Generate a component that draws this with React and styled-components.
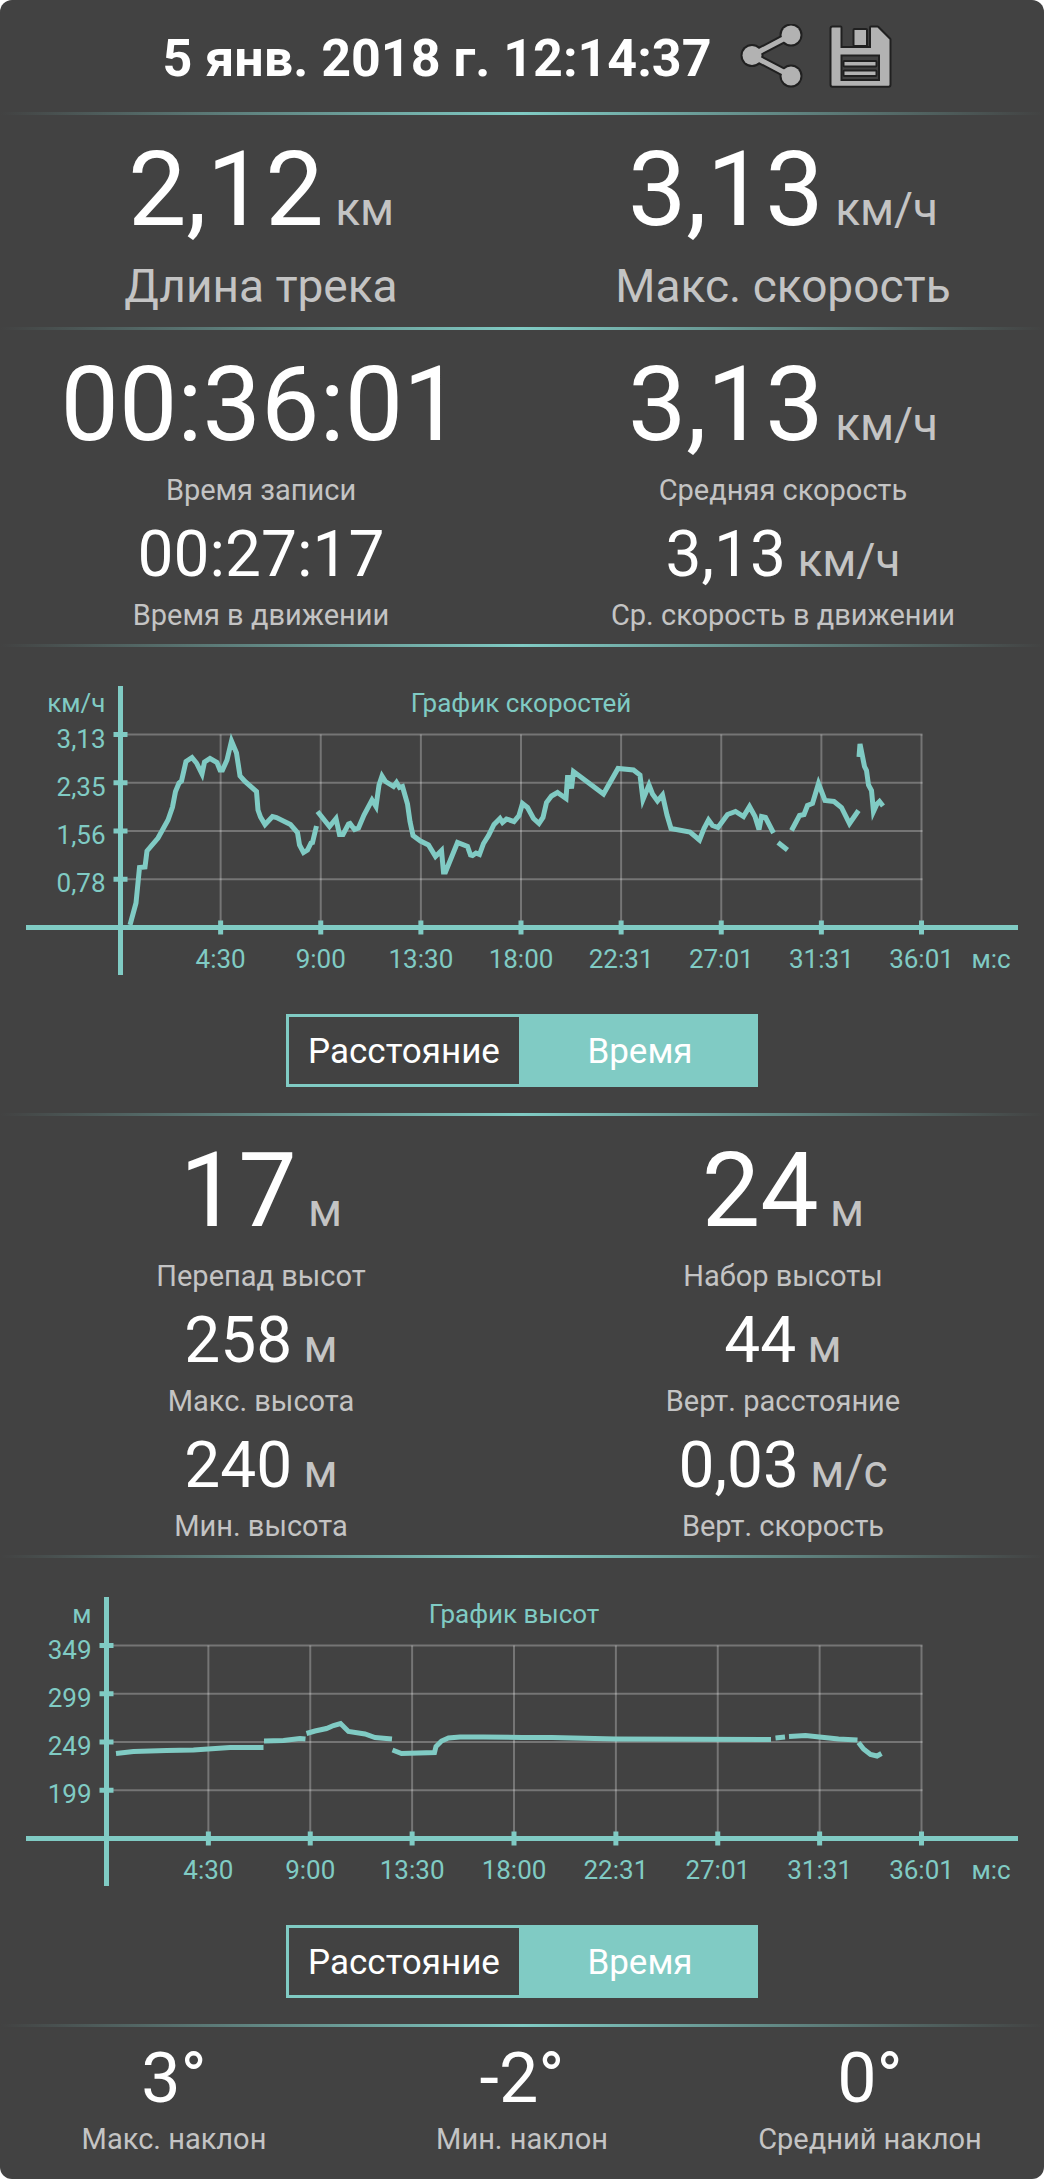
import React, { useState } from "react"
import styled, { createGlobalStyle } from "styled-components"

const colors = {
  page: "#ffffff",
  card: "#424242",
  accent: "#80cbc4",
  text: "#ffffff",
  muted: "#c4c4c4",
  icon: "#b2b2b2",
  outline: "#202020",
  grid: "rgba(255, 255, 255, .27)"
}

const GlobalStyle = createGlobalStyle`
  body {
    margin: 0;
    background: ${colors.page};
    font-family: Roboto, "Noto Sans", sans-serif;
  }
`

const Card = styled.main`
  padding-bottom: 11px;
  background: ${colors.card};
  color: ${colors.text};
  border-radius: 12px;
  overflow: hidden;
`

const Header = styled.header`
  display: flex;
  align-items: center;
  justify-content: center;
  height: 112px;
  padding-left: 10px;
`

const Title = styled.h1`
  margin: 0 28px 0 0;
  padding-top: 6px;
  font-size: 52px;
  line-height: 60px;
  font-weight: 700;
`

const IconButton = styled.button`
  display: block;
  width: 64px;
  height: 64px;
  padding: 0;
  border: 0;
  background: none;
  cursor: pointer;

  & + & {
    margin-left: 24px;
  }
`

const Divider = styled.hr`
  height: 3px;
  margin: 0;
  border: 0;
  background: linear-gradient(to right, transparent, ${colors.accent}, transparent);
`

const Stats = styled.section`
  display: grid;
  grid-template-columns: repeat(${props => props.$columns || 2}, 1fr);
  row-gap: 8px;
  padding: 11px 0;
  text-align: center;
`

const valueSizes = {
  big: ["104px", "128px"],
  middle: ["70px", "80px"],
  small: ["64px", "78px"]
}

const Value = styled.div`
  font-size: ${props => valueSizes[props.$size][0]};
  line-height: ${props => valueSizes[props.$size][1]};
  white-space: nowrap;
`

const Unit = styled.span`
  font-size: 46px;
  line-height: 46px;
  color: ${colors.muted};
`

const Label = styled.div`
  margin-top: 3px;
  font-size: ${props => (props.$big ? "46px" : "29px")};
  line-height: ${props => (props.$big ? "59px" : "36px")};
  color: ${colors.muted};
`

const ChartSection = styled.section`
  display: flex;
  flex-direction: column;
  align-items: center;
  gap: 39px;
  padding: 39px 0 26px;
`

const ChartSvg = styled.svg`
  display: block;
  width: 100%;
  height: auto;

  text {
    font-size: 26px;
    fill: ${colors.accent};
    text-anchor: middle;
  }

  .scale {
    text-anchor: end;
  }
`

const Toggle = styled.div`
  display: flex;
`

const ToggleButton = styled.button`
  width: 236px;
  height: 73px;
  padding: 3px 0 0;
  border: 3px solid ${colors.accent};
  background: ${props => (props.$active ? colors.accent : "transparent")};
  color: ${colors.text};
  font-family: inherit;
  font-size: 35px;
  line-height: 42px;
  cursor: pointer;
`

const times = ["4:30", "9:00", "13:30", "18:00", "22:31", "27:01", "31:31", "36:01"]

// plot area: the last time tick sits at RIGHT, value zero at BASE
const RIGHT = 921.5
const BASE = 241.5
const ROW = 48.25

// every gap in the recording starts a new line
const speedLines = [
  "130,239 136,217 139.5,181.5 145,181 147,165 158,152 168,134 172.5,121 175.5,105.5 179,97 181.5,95 186,75.5 192,71.5 196.5,77 202,88 204.5,76 210,72.5 217,76.5 220,84 222.5,84 227,74 231.5,55 236.5,67 240,90 245,95.5 256.5,105.5 258,124 260.5,131 265,138.5 272.5,130.5 276.5,131.5 290.5,138.5 297.5,146.5 299.5,159 303.5,166.5 307.5,164 311,157 312.5,156.5 316.5,140",
  "317.5,125.5 329.5,140.5 336,132.5 339.5,148.5 343,148.5 348.5,138 350,137.5 354.5,143.5 358.5,142 364,129 372,114 376,120.5 379,99 382,90 385.5,95.5 393.5,100.5 396.5,96.5 399.5,101.5 402.5,100.5 407.5,118 410,135.5 413,149.5 420.5,155 428.5,159 435.5,170.5 441.5,164.5 443.5,186 445.5,186 457.5,156.5 467.5,160.5 470.5,169 472.5,169.5 476,167 479.5,168.5 483.5,157.5 488.5,149.5 494,138.5 500,132.5 502.5,136.5 506.5,133 514,135.5 519,129.5 522.5,117.5 527.5,121.5 533.5,132.5 539,137.5 543,131.5 546.5,116.5 551.5,110 557.5,106.5 566,112.5 567.5,91.5 569.5,91.5 571.5,102.5 573.5,85.5 603.5,108 618,82.5 633.5,84 640,89 643,113.5 649,99 652.5,108 657.5,115 662.5,109 667,129 671,142.5 690,146 699.5,154 704,142.5 708.5,134 712.5,139.5 718,141.5 727.5,128.5 735.5,125.5 743.5,130.5 749.5,120.5 755,130.5 759,143.5 761.5,130.5 765.5,131.5 773.5,147",
  "778,156.5 787.5,164",
  "791.5,144.5 799.5,129.5 804,128.5 807.5,119.5 812.5,117.5 818.5,97.5 825,114.5 834,115.5 841.5,121.5 849.5,137.5 858.5,124.5",
  "859,71 860,58 864.5,80.5 866.5,84.5 868.5,99 871.5,104.5 873.5,125.5 877,118 879.5,115.5 883,120"
]

const heightLines = [
  "116,156.5 133.5,154.5 166.5,153.5 193.5,153 230,150.5 263.5,150.5",
  "264,144 283.5,143.5 300,141.5 305.5,142",
  "306.5,136.5 315,134 326.5,131.5 333.5,128.5 340.5,126.5 348.5,134.5 365,137 375,140.5 392,142",
  "392.5,153 401.5,156.5 434.5,155.5 436,149.5 441.5,144 448.5,141 460,140 483.5,140 522,140.5 552,140.5 615.5,142 771,142.5",
  "775.5,141 785,140",
  "789,139.5 805.5,138.5 819.5,140 838.5,142 857.5,143",
  "858.5,145.5 863.5,152 870.5,157.5 877,159 881.5,156.5"
]

const ShareIcon = () => (
  <svg viewBox="0 0 64 64" width="64" height="64" aria-hidden="true">
    <g fill={colors.outline} stroke={colors.outline}>
      <path d="M51 11L12 31.500L51 52" fill="none" strokeWidth="9" />
      <circle cx="51" cy="11" r="11.500" stroke="none" />
      <circle cx="12" cy="31.500" r="11.500" stroke="none" />
      <circle cx="51" cy="52" r="11.500" stroke="none" />
    </g>
    <g fill={colors.icon} stroke={colors.icon}>
      <path d="M51 11L12 31.500L51 52" fill="none" strokeWidth="5" />
      <circle cx="51" cy="11" r="9.500" stroke="none" />
      <circle cx="12" cy="31.500" r="9.500" stroke="none" />
      <circle cx="51" cy="52" r="9.500" stroke="none" />
    </g>
  </svg>
)

const SaveIcon = () => (
  <svg viewBox="0 0 64 64" width="64" height="64" aria-hidden="true">
    <g fill={colors.icon} fillRule="evenodd" stroke={colors.outline} strokeWidth="4" strokeLinejoin="round" paintOrder="stroke">
      <path d="M3.500 4.500q0-1 1-1H12.500V24H43V3.500H49.500L61.500 15.500V60.500q0 1.200-1 1.200H4.500q-1 0-1-1.200ZM12.500 30.500V57H52V30.500Z" />
      <path d="M26.500 6H38V21H26.500Z" />
      <path d="M16.500 38H47.500V41.500H16.500ZM16.500 47.500H47.500V51H16.500Z" />
    </g>
  </svg>
)

const Stat = ({ value, unit, label, size = "small", bigLabel }) => (
  <div>
    <Value $size={size}>
      {value}
      {unit && <Unit> {unit}</Unit>}
    </Value>
    <Label $big={bigLabel}>{label}</Label>
  </div>
)

const Chart = ({ title, unit, scale, left, lines }) => {
  const step = (RIGHT - left) / times.length
  const rows = scale.map((label, i) => ({ label, y: BASE - ROW * (scale.length - i) }))
  const cols = times.map((label, i) => ({ label, x: left + step * (i + 1) }))

  return (
    <ChartSvg viewBox="0 0 1044 289" role="img" aria-label={title}>
      <g stroke={colors.grid} strokeWidth="2">
        {rows.map(r => <line key={r.label} x1={left} x2={RIGHT + 1} y1={r.y} y2={r.y} />)}
        {cols.map(c => <line key={c.label} x1={c.x} x2={c.x} y1={BASE - ROW * 4} y2={BASE} />)}
      </g>
      <g stroke={colors.accent} strokeWidth="5">
        <line x1={left} x2={left} y1="0" y2="289" />
        <line x1="26" x2="1018" y1={BASE} y2={BASE} />
        {rows.map(r => <line key={r.label} x1={left - 7} x2={left + 7} y1={r.y} y2={r.y} />)}
        {cols.map(c => <line key={c.label} x1={c.x} x2={c.x} y1={BASE - 7} y2={BASE + 7} />)}
      </g>
      <g fill="none" stroke={colors.accent} strokeWidth="5">
        {lines.map(points => <polyline key={points} points={points} />)}
      </g>
      <text className="scale" x={left - 15} y="26">{unit}</text>
      {rows.map(r => <text key={r.label} className="scale" x={left - 15} y={r.y + 13}>{r.label}</text>)}
      {cols.map(c => <text key={c.label} x={c.x} y="282">{c.label}</text>)}
      <text x="991" y="282">м:с</text>
      <text x={(left + RIGHT) / 2} y="26">{title}</text>
    </ChartSvg>
  )
}

const AxisToggle = () => {
  const [axis, setAxis] = useState("time")

  return (
    <Toggle role="group">
      <ToggleButton type="button" $active={axis === "distance"} aria-pressed={axis === "distance"}
        onClick={() => setAxis("distance")}>
        Расстояние
      </ToggleButton>
      <ToggleButton type="button" $active={axis === "time"} aria-pressed={axis === "time"}
        onClick={() => setAxis("time")}>
        Время
      </ToggleButton>
    </Toggle>
  )
}

const App = () => (
  <>
    <GlobalStyle />
    <Card>
      <Header>
        <Title>5 янв. 2018 г. 12:14:37</Title>
        <IconButton type="button" aria-label="Поделиться"><ShareIcon /></IconButton>
        <IconButton type="button" aria-label="Сохранить"><SaveIcon /></IconButton>
      </Header>
      <Divider />
      <Stats>
        <Stat size="big" bigLabel value="2,12" unit="км" label="Длина трека" />
        <Stat size="big" bigLabel value="3,13" unit="км/ч" label="Макс. скорость" />
      </Stats>
      <Divider />
      <Stats>
        <Stat size="big" value="00:36:01" label="Время записи" />
        <Stat size="big" value="3,13" unit="км/ч" label="Средняя скорость" />
        <Stat value="00:27:17" label="Время в движении" />
        <Stat value="3,13" unit="км/ч" label="Ср. скорость в движении" />
      </Stats>
      <Divider />
      <ChartSection>
        <Chart title="График скоростей" unit="км/ч" left={120.5} lines={speedLines}
          scale={["3,13", "2,35", "1,56", "0,78"]} />
        <AxisToggle />
      </ChartSection>
      <Divider />
      <Stats>
        <Stat size="big" value="17" unit="м" label="Перепад высот" />
        <Stat size="big" value="24" unit="м" label="Набор высоты" />
        <Stat value="258" unit="м" label="Макс. высота" />
        <Stat value="44" unit="м" label="Верт. расстояние" />
        <Stat value="240" unit="м" label="Мин. высота" />
        <Stat value="0,03" unit="м/с" label="Верт. скорость" />
      </Stats>
      <Divider />
      <ChartSection>
        <Chart title="График высот" unit="м" left={106.5} lines={heightLines}
          scale={["349", "299", "249", "199"]} />
        <AxisToggle />
      </ChartSection>
      <Divider />
      <Stats $columns={3}>
        <Stat size="middle" value="3°" label="Макс. наклон" />
        <Stat size="middle" value="-2°" label="Мин. наклон" />
        <Stat size="middle" value="0°" label="Средний наклон" />
      </Stats>
    </Card>
  </>
)

export default App
